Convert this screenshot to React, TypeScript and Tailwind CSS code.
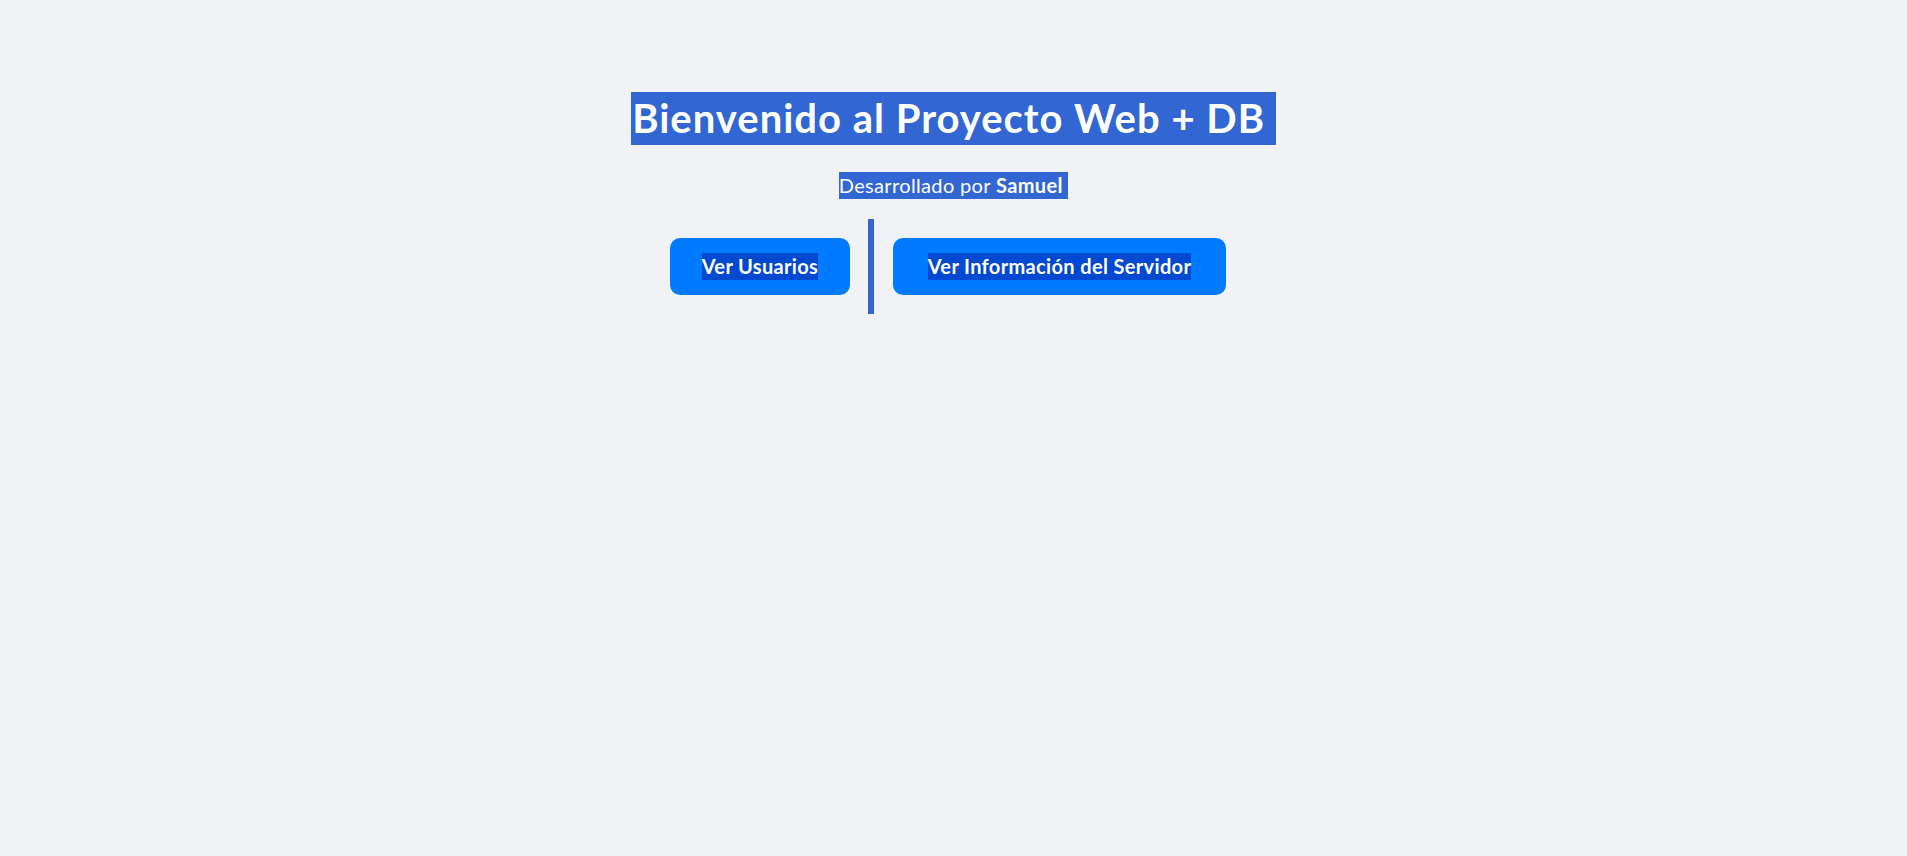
const font = { fontFamily: 'Lato, "Open Sans", sans-serif' };

export default function App() {
  return (
    <div
      className="min-h-[856px] w-full bg-[#f0f2f5] pt-[92px] flex flex-col items-center text-white"
      style={font}
    >
      <h1 className="text-[40px] font-bold leading-[53px] tracking-[1px]">
        <span className="inline-block bg-[#3166d3] pl-[1px]">Bienvenido al Proyecto Web + DB&nbsp;</span>
      </h1>
      <p className="mt-[27px] text-[20px] leading-[27px] tracking-[0.35px]">
        <span className="inline-block bg-[#3166d3]">
          Desarrollado por <strong className="font-bold">Samuel</strong>&nbsp;
        </span>
      </p>
      <div className="mt-[20px] mr-[11px] flex items-center h-[95px]">
        <button className="h-[57px] w-[180px] rounded-[10px] bg-[#007bff] flex items-center justify-center text-[20px] font-bold leading-[27px] tracking-[0.35px]">
          <span className="inline-block bg-[#0049d0]">Ver Usuarios</span>
        </button>
        <span className="ml-[18px] mr-[19px] h-[95px] w-[6px] bg-[#3166d3]" />
        <button className="h-[57px] w-[333px] rounded-[10px] bg-[#007bff] flex items-center justify-center text-[20px] font-bold leading-[27px] tracking-[0.35px]">
          <span className="inline-block bg-[#0049d0]">Ver Información del Servidor</span>
        </button>
      </div>
    </div>
  );
}
